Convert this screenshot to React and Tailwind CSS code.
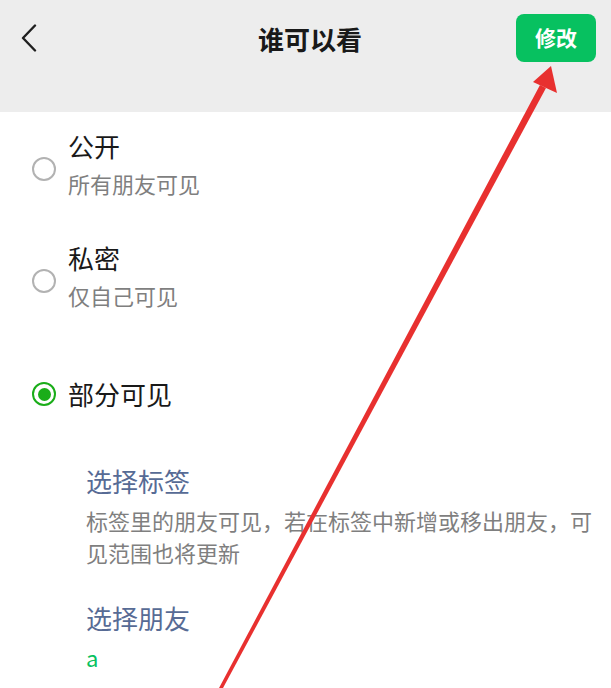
import React from "react";

const font = { fontFamily: '"Noto Sans CJK SC", "Noto Sans", sans-serif' };

function Radio({ checked }) {
  if (checked) {
    return (
      <div className="flex h-[24px] w-[24px] shrink-0 items-center justify-center rounded-full border-[2.5px] border-[#1aad19] bg-white">
        <div className="h-[13px] w-[13px] rounded-full bg-[#1aad19]" />
      </div>
    );
  }
  return <div className="h-[24px] w-[24px] shrink-0 rounded-full border-2 border-[#b2b2b2]" />;
}

function Option({ title, sub, className = "" }) {
  return (
    <div className={`flex items-start gap-[12px] ${className}`}>
      <div className="mt-[29px] shrink-0">
        <Radio />
      </div>
      <div>
        <div className="text-[26px] leading-[36px] text-[#191919]">{title}</div>
        <div className="text-[22px] leading-[38px] text-[#7f7f7f]">{sub}</div>
      </div>
    </div>
  );
}

export default function App() {
  return (
    <div className="relative h-[688px] w-[611px] overflow-hidden bg-white" style={font}>
      {/* top bar */}
      <header className="h-[112px] bg-[#ededed] pt-[14px]">
        <div className="grid h-[48px] grid-cols-[80px_1fr_80px] items-center pl-[20px] pr-[15px]">
          <svg width="18" height="28" viewBox="0 0 18 28" className="text-[#1f1f1f]">
            <path d="M15 1.5 L3 14 L15 26.5" fill="none" stroke="currentColor" strokeWidth="2.4" strokeLinecap="round" strokeLinejoin="round" />
          </svg>
          <h1 className="translate-x-[2px] text-center text-[26px] font-bold text-[#191919]">谁可以看</h1>
          <button className="h-[48px] w-[80px] rounded-[8px] bg-[#07c160] text-[21px] font-bold text-white">修改</button>
        </div>
      </header>

      {/* visibility options */}
      <main className="pl-[32px] pt-[16px]">
        <Option title="公开" sub="所有朋友可见" />
        <Option className="mt-[38px]" title="私密" sub="仅自己可见" />
        <div className="mt-[62px] flex items-center gap-[12px]">
          <Radio checked />
          <div className="text-[26px] leading-[36px] text-[#191919]">部分可见</div>
        </div>

        <div className="pl-[54px] pr-[12px] pt-[51px]">
          <div className="text-[26px] leading-[36px] text-[#576b95]">选择标签</div>
          <p className="mt-[5px] text-[22px] leading-[32px] text-[#7f7f7f]">
            标签里的朋友可见，若在标签中新增或移出朋友，可见范围也将更新
          </p>
          <div className="mt-[32px] text-[26px] leading-[36px] text-[#576b95]">选择朋友</div>
          <div className="mt-[6px] text-[22px] leading-[30px] text-[#07c160]">a</div>
        </div>
      </main>

      {/* red annotation arrow */}
      <svg className="pointer-events-none absolute inset-0" width="611" height="688" viewBox="0 0 611 688">
        <polygon points="219,688 223,688 546,88 540,85" fill="#e8302f" />
        <polygon points="551,66 533,82 557,93" fill="#e8302f" />
      </svg>
    </div>
  );
}
